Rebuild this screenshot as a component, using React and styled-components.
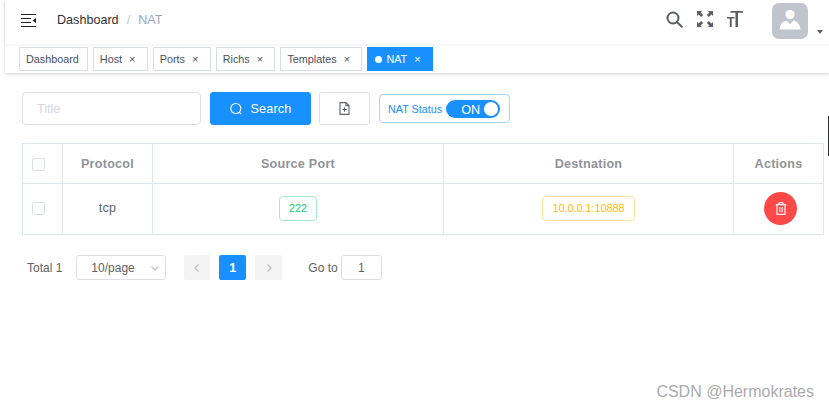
import { createGlobalStyle, styled } from "styled-components";

const Global = createGlobalStyle`
  html, body { margin: 0; padding: 0; background: #fff; }
  body {
    font-family: "Liberation Sans", Arial, sans-serif;
    color: #606266;
    overflow: hidden;
  }
`;

const Page = styled.div`
  position: relative;
  width: 829px;
  height: 407px;
  overflow: hidden;
`;

const Header = styled.header`
  margin-left: 5px;
  height: 73px;
  box-shadow: 0 1px 3px rgba(0, 21, 41, 0.2);
`;

const Navbar = styled.div`
  height: 44px;
  display: flex;
  align-items: center;
  padding: 0 0 0 16px;
  box-shadow: 0 1px 3px rgba(0, 21, 41, 0.06);
`;

const Crumbs = styled.div`
  margin-left: 21px;
  margin-top: -4px;
  font-size: 12.6px;
  color: #303133;
  display: flex;
  flex: 1;
`;

const Sep = styled.span`
  color: #c0c4cc;
  margin: 0 8px;
`;

const Current = styled.span`
  color: #97a8be;
`;

const RightMenu = styled.div`
  display: flex;
  align-items: center;
`;

const NavIcon = styled.span`
  display: flex;
  width: ${(p) => p.$w}px;
  justify-content: center;
  margin-top: -6px;
`;

const Avatar = styled.div`
  width: 36px;
  height: 36px;
  border-radius: 7px;
  background: #c0c4cc;
  margin-left: 22px;
  margin-top: -2px;
  display: flex;
  align-items: center;
  justify-content: center;
`;

const Caret = styled.span`
  width: 0;
  height: 0;
  border: 3px solid transparent;
  border-top: 4px solid #5a5e66;
  margin: 22px 6px 0 9px;
`;

const TagBar = styled.div`
  height: 29px;
  display: flex;
  align-items: flex-start;
  padding: 3px 0 0 14px;
  gap: 5px;
  box-sizing: border-box;
`;

const Tag = styled.div`
  height: 24px;
  box-sizing: border-box;
  border: 1px solid ${(p) => (p.$active ? "#1890ff" : "#d8dce5")};
  background: ${(p) => (p.$active ? "#1890ff" : "#fff")};
  color: ${(p) => (p.$active ? "#fff" : "#495060")};
  font-size: 10.8px;
  display: flex;
  align-items: center;
  padding: 0 ${(p) => (p.$close ? "11.3px" : "8px")} 0 ${(p) => (p.$active ? "7px" : "6px")};
  white-space: nowrap;
`;

const Dot = styled.i`
  width: 7px;
  height: 7px;
  border-radius: 50%;
  background: #fff;
  margin-right: 4px;
`;

const Close = styled.span`
  font-size: 11px;
  margin-left: 7px;
  line-height: 1;
`;

const Content = styled.main`
  padding: 19px 5px 0 22px;
`;

const Filter = styled.div`
  display: flex;
  align-items: center;
  height: 33px;
  margin-bottom: 18px;
`;

const TitleInput = styled.input`
  width: 179px;
  height: 33px;
  box-sizing: border-box;
  border: 1px solid #dcdfe6;
  border-radius: 4px;
  padding: 0 14px;
  font: 12.6px "Liberation Sans", Arial, sans-serif;
  outline: none;
  &::placeholder { color: #d3d6dc; }
`;

const Button = styled.button`
  height: 33px;
  box-sizing: border-box;
  border-radius: 3px;
  border: 1px solid ${(p) => (p.$primary ? "#1890ff" : "#dcdfe6")};
  background: ${(p) => (p.$primary ? "#1890ff" : "#fff")};
  color: ${(p) => (p.$primary ? "#fff" : "#606266")};
  width: ${(p) => p.$w}px;
  margin-left: ${(p) => p.$ml}px;
  display: flex;
  align-items: center;
  justify-content: center;
  gap: 7px;
  font: 12.6px "Liberation Sans", Arial, sans-serif;
  letter-spacing: 0.2px;
  padding: 0;
`;

const StatusBox = styled.div`
  margin-left: 9px;
  width: 131px;
  height: 29px;
  box-sizing: border-box;
  border: 1px solid #a3d3ff;
  border-radius: 4px;
  color: #1890ff;
  font-size: 10.8px;
  display: flex;
  align-items: center;
  padding-left: 8px;
  gap: 4px;
  white-space: nowrap;
`;

const Switch = styled.div`
  width: 54px;
  height: 18px;
  border-radius: 9px;
  background: #1890ff;
  position: relative;
  color: #fff;
  font-size: 12.6px;
  line-height: 20px;
  padding-left: 15px;
  box-sizing: border-box;
  &::after {
    content: "";
    position: absolute;
    right: 2px;
    top: 2px;
    width: 14px;
    height: 14px;
    border-radius: 50%;
    background: #fff;
  }
`;

const Table = styled.table`
  width: 802px;
  border-collapse: collapse;
  table-layout: fixed;
  border: 1px solid #dfe6ec;
`;

const Th = styled.th`
  width: ${(p) => (p.$w ? `${p.$w}px` : "auto")};
  height: 39px;
  padding: 0;
  border: 1px solid #dfe6ec;
  font-size: 12.6px;
  font-weight: 700;
  color: #909399;
  letter-spacing: 0.25px;
  text-align: center;
`;

const Td = styled.td`
  height: 48px;
  padding: 0 0 2px;
  border: 1px solid #dfe6ec;
  font-size: 12.6px;
  color: #606266;
  letter-spacing: 0.3px;
  text-align: center;
`;

const Check = styled.span`
  display: inline-block;
  vertical-align: middle;
  width: 13px;
  height: 13px;
  margin-right: 9px;
  box-sizing: border-box;
  border: 1px solid #dcdfe6;
  border-radius: 2px;
  background: #fff;
`;

const Badge = styled.span`
  display: inline-block;
  height: 25px;
  line-height: 23px;
  box-sizing: border-box;
  padding: 0 9px;
  font-size: 10.8px;
  border-radius: 4px;
  letter-spacing: 0;
  color: ${(p) => p.$color};
  background: #fff;
  border: 1px solid ${(p) => p.$border};
`;

const RoundButton = styled.button`
  width: 33px;
  height: 33px;
  margin-left: 4px;
  border-radius: 50%;
  border: none;
  background: #ff4949;
  padding: 0;
  display: inline-flex;
  align-items: center;
  justify-content: center;
  vertical-align: middle;
`;

const Pagination = styled.div`
  display: flex;
  align-items: center;
  height: 25px;
  margin-top: 20px;
  padding-left: 5px;
  font-size: 12px;
  color: #606266;
`;

const Select = styled.div`
  margin-left: 14px;
  width: 90px;
  height: 25px;
  box-sizing: border-box;
  border: 1px solid #dcdfe6;
  border-radius: 3px;
  display: flex;
  align-items: center;
  justify-content: space-between;
  padding: 0 5px 0 14px;
`;

const PageButton = styled.div`
  width: ${(p) => p.$w}px;
  height: 25px;
  margin-left: ${(p) => p.$ml}px;
  border-radius: 2px;
  background: ${(p) => (p.$active ? "#1890ff" : "#f4f4f5")};
  color: ${(p) => (p.$active ? "#fff" : "#c0c4cc")};
  font-weight: 700;
  font-size: 12.6px;
  display: flex;
  align-items: center;
  justify-content: center;
`;

const GoTo = styled.span`
  margin-left: 26px;
`;

const GoInput = styled.div`
  margin-left: 3px;
  width: 41px;
  height: 25px;
  box-sizing: border-box;
  border: 1px solid #dcdfe6;
  border-radius: 3px;
  display: flex;
  align-items: center;
  justify-content: center;
  font-size: 12px;
`;

const Watermark = styled.div`
  position: absolute;
  right: 15px;
  top: 383px;
  font-size: 16px;
  color: #ababab;
`;

const ScrollMark = styled.div`
  position: absolute;
  left: 828px;
  top: 116px;
  width: 1px;
  height: 40px;
  background: #303133;
`;

const Hamburger = () => (
  <svg width="15" height="13" viewBox="0 0 15 13" style={{ marginTop: -4 }}>
    <g fill="#222" shapeRendering="crispEdges">
      <rect x="0" y="0" width="15" height="1" />
      <rect x="0" y="4" width="10" height="1" />
      <rect x="0" y="8" width="10" height="1" />
      <rect x="0" y="12" width="15" height="1" />
    </g>
    <path d="M15 4v5l-3.500-2.500z" fill="#222" />
  </svg>
);

const SearchIcon = () => (
  <svg width="17" height="17" viewBox="0 0 17 17" fill="none" stroke="#5a5e66" strokeWidth="2" strokeLinecap="round">
    <circle cx="7" cy="7" r="5.500" />
    <path d="M11.200 11.200l4.600 4.600" />
  </svg>
);

const FullscreenIcon = () => (
  <svg width="16" height="16" viewBox="0 0 16 16" fill="#5a5e66">
    <path d="M0 0h5L3.600 1.500l2.600 2.600-2 2-2.600-2.600L0 5z" />
    <path d="M16 0h-5l1.400 1.500-2.600 2.600 2 2 2.600-2.600L16 5z" />
    <path d="M0 16h5l-1.400-1.500 2.600-2.600-2-2-2.600 2.600L0 11z" />
    <path d="M16 16h-5l1.400-1.500-2.600-2.600 2-2 2.600 2.600L16 11z" />
  </svg>
);

const SizeIcon = () => (
  <svg width="16" height="16" viewBox="0 0 16 16" fill="#5a5e66">
    <path d="M3.500 0H16v1.700h-5V16H8.500V1.700h-5z" />
    <path d="M0 6h7.500v1.600H4.700V16H2.800V7.600H0z" />
  </svg>
);

const UserIcon = () => (
  <svg width="22" height="24" viewBox="0 0 22 24" fill="#fff">
    <circle cx="11" cy="5.500" r="4.600" />
    <path d="M7.500 11.500l3.500 3.500 3.500-3.500c3.500.5 6.500 4 7 9H.5c.5-5 3.500-8.500 7-9z" />
  </svg>
);

const MagnifierIcon = () => (
  <svg width="14" height="14" viewBox="0 0 14 14" fill="none" stroke="#fff" strokeWidth="1.100">
    <circle cx="6.800" cy="6.500" r="5" />
    <path d="M10.300 10.200l2 2" />
  </svg>
);

const FileIcon = () => (
  <svg width="11" height="13" viewBox="0 0 11 13" fill="none" stroke="#606266" strokeWidth="1.100">
    <path d="M1 .6h6l3 3v8.800H1z" />
    <path d="M7 .6v3h3M3.200 7.500h4.600M5.500 5.200v4.600" />
  </svg>
);

const TrashIcon = () => (
  <svg width="12" height="13" viewBox="0 0 12 13" fill="none" stroke="#fff" strokeWidth="1.100">
    <path d="M.8 2.600h10.400M4 2.500V.8h4v1.700M2 2.600v9.800h8V2.600M4.800 5v5M7.200 5v5" />
  </svg>
);

const Chevron = ({ dir, color, size = 10 }) => {
  const paths = {
    left: "M6.500 1.500L3 5l3.500 3.500",
    right: "M3.500 1.500L7 5 3.500 8.500",
    down: "M1.500 3.500L5 7l3.500-3.500",
  };
  return (
    <svg width={size} height={size} viewBox="0 0 10 10" fill="none" stroke={color} strokeWidth="1.400">
      <path d={paths[dir]} />
    </svg>
  );
};

const tags = [
  { label: "Dashboard" },
  { label: "Host", close: true },
  { label: "Ports", close: true },
  { label: "Richs", close: true },
  { label: "Templates", close: true },
  { label: "NAT", close: true, active: true },
];

export default function App() {
  return (
    <Page>
      <Global />
      <Header>
        <Navbar>
          <Hamburger />
          <Crumbs>
            Dashboard
            <Sep>/</Sep>
            <Current>NAT</Current>
          </Crumbs>
          <RightMenu>
            <NavIcon $w={31}><SearchIcon /></NavIcon>
            <NavIcon $w={30}><FullscreenIcon /></NavIcon>
            <NavIcon $w={30}><SizeIcon /></NavIcon>
            <Avatar><UserIcon /></Avatar>
            <Caret />
          </RightMenu>
        </Navbar>
        <TagBar>
          {tags.map((tag) => (
            <Tag key={tag.label} $active={tag.active} $close={tag.close}>
              {tag.active && <Dot />}
              {tag.label}
              {tag.close && <Close>×</Close>}
            </Tag>
          ))}
        </TagBar>
      </Header>
      <Content>
        <Filter>
          <TitleInput placeholder="Title" />
          <Button $primary $w={101} $ml={9}>
            <MagnifierIcon />
            Search
          </Button>
          <Button $w={51} $ml={8}>
            <FileIcon />
          </Button>
          <StatusBox>
            NAT Status
            <Switch>ON</Switch>
          </StatusBox>
        </Filter>
        <Table>
          <thead>
            <tr>
              <Th $w={39}><Check /></Th>
              <Th $w={89}>Protocol</Th>
              <Th $w={290}>Source Port</Th>
              <Th $w={289}>Destnation</Th>
              <Th>Actions</Th>
            </tr>
          </thead>
          <tbody>
            <tr>
              <Td><Check /></Td>
              <Td>tcp</Td>
              <Td><Badge $color="#13ce66" $border="#a1ebc2">222</Badge></Td>
              <Td><Badge $color="#ffba00" $border="#ffe399">10.0.0.1:10888</Badge></Td>
              <Td><RoundButton aria-label="delete"><TrashIcon /></RoundButton></Td>
            </tr>
          </tbody>
        </Table>
        <Pagination>
          Total 1
          <Select>
            10/page
            <Chevron dir="down" color="#c0c4cc" />
          </Select>
          <PageButton $w={26} $ml={18}><Chevron dir="left" color="#c0c4cc" /></PageButton>
          <PageButton $w={27} $ml={9} $active>1</PageButton>
          <PageButton $w={27} $ml={9}><Chevron dir="right" color="#c0c4cc" /></PageButton>
          <GoTo>Go to</GoTo>
          <GoInput>1</GoInput>
        </Pagination>
      </Content>
      <ScrollMark />
      <Watermark>CSDN @Hermokrates</Watermark>
    </Page>
  );
}
